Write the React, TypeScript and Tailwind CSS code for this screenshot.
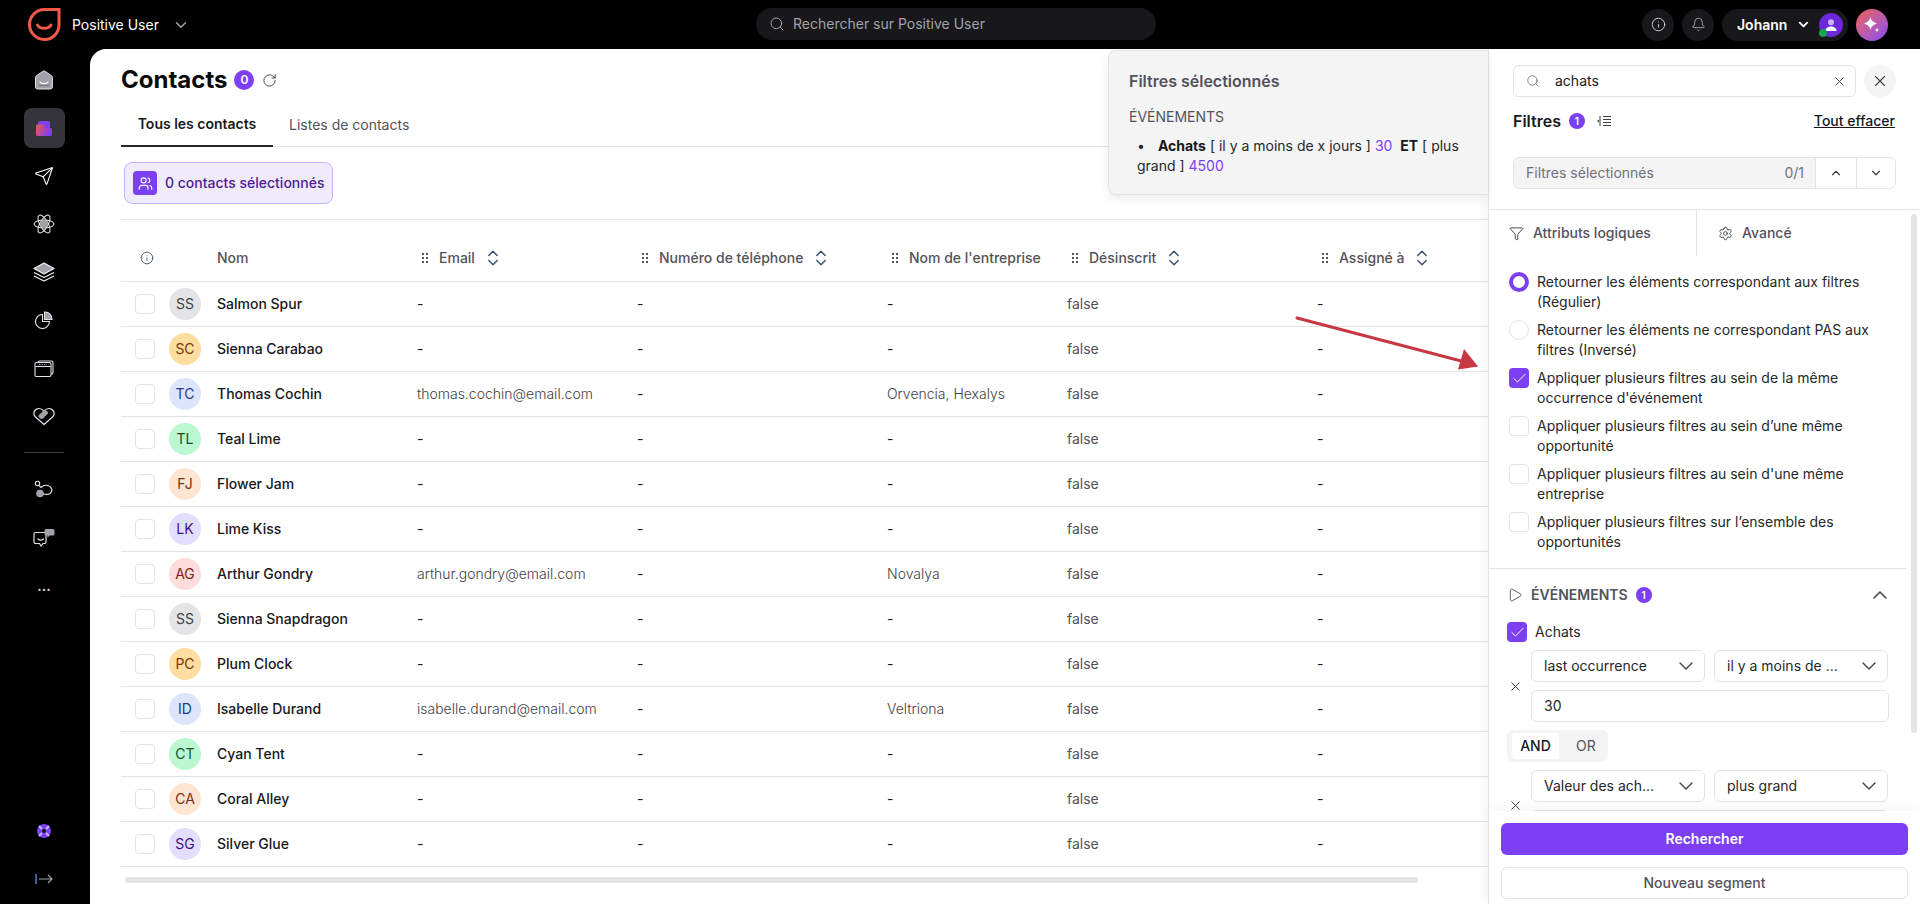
import { Bell, Check, ChevronDown, ChevronUp, ChevronsUpDown, Filter, Info, Play, RotateCw, Search, Send, Settings, Users, X } from 'lucide-react'

type Contact = {
  initials: string
  name: string
  email: string
  company: string
  avatar: string
}

const gray = 'bg-[#e4e4e7] text-[#3f3f46]'
const amber = 'bg-[#fedd9f] text-[#78350f]'
const blue = 'bg-[#dde5fd] text-[#1e3a8a]'
const green = 'bg-[#bbf7d0] text-[#14532d]'
const orange = 'bg-[#fee5d2] text-[#7c2d12]'
const purple = 'bg-[#e4defe] text-[#3b0e8c]'
const red = 'bg-[#fddcdc] text-[#7f1d1d]'

const contacts: Contact[] = [
  { initials: 'SS', name: 'Salmon Spur', email: '-', company: '-', avatar: gray },
  { initials: 'SC', name: 'Sienna Carabao', email: '-', company: '-', avatar: amber },
  { initials: 'TC', name: 'Thomas Cochin', email: 'thomas.cochin@email.com', company: 'Orvencia, Hexalys', avatar: blue },
  { initials: 'TL', name: 'Teal Lime', email: '-', company: '-', avatar: green },
  { initials: 'FJ', name: 'Flower Jam', email: '-', company: '-', avatar: orange },
  { initials: 'LK', name: 'Lime Kiss', email: '-', company: '-', avatar: purple },
  { initials: 'AG', name: 'Arthur Gondry', email: 'arthur.gondry@email.com', company: 'Novalya', avatar: red },
  { initials: 'SS', name: 'Sienna Snapdragon', email: '-', company: '-', avatar: gray },
  { initials: 'PC', name: 'Plum Clock', email: '-', company: '-', avatar: amber },
  { initials: 'ID', name: 'Isabelle Durand', email: 'isabelle.durand@email.com', company: 'Veltriona', avatar: blue },
  { initials: 'CT', name: 'Cyan Tent', email: '-', company: '-', avatar: green },
  { initials: 'CA', name: 'Coral Alley', email: '-', company: '-', avatar: orange },
  { initials: 'SG', name: 'Silver Glue', email: '-', company: '-', avatar: purple },
]

const options = [
  { kind: 'radio-on', text: 'Retourner les éléments correspondant aux filtres (Régulier)' },
  { kind: 'radio', text: 'Retourner les éléments ne correspondant PAS aux filtres (Inversé)' },
  { kind: 'check-on', text: "Appliquer plusieurs filtres au sein de la même occurrence d'événement" },
  { kind: 'check', text: 'Appliquer plusieurs filtres au sein d’une même opportunité' },
  { kind: 'check', text: "Appliquer plusieurs filtres au sein d'une même entreprise" },
  { kind: 'check', text: 'Appliquer plusieurs filtres sur l’ensemble des opportunités' },
]

const gridCols = 'grid grid-cols-[96px_200px_220px_250px_180px_250px_1fr]'

function Logo() {
  return (
    <svg width="33" height="33" viewBox="0 0 33 33" fill="none" stroke="#f4594a" strokeWidth="3" strokeLinecap="round">
      <path d="M31 1.500H16.500C8 1.500 1.500 8.400 1.500 16.500S8.200 31.500 16.500 31.500 31 24.800 31 16.500V1.500Z" />
      <path d="M9.500 17c2 4.400 11 4.400 13.500 0" />
    </svg>
  )
}

function HomeIcon() {
  return (
    <svg width="20" height="20" viewBox="0 0 20 20">
      <path d="M8.800 1.400a2 2 0 0 1 2.400 0l6.300 4.300a2 2 0 0 1 .9 1.600V17a2 2 0 0 1-2 2H3.500a2 2 0 0 1-2-2V7.300a2 2 0 0 1 .9-1.600Z" fill="#a1a1aa" stroke="#e4e4e7" strokeWidth="1" />
      <path d="M6 12c1.300 2.200 6.700 2.200 8 0" fill="none" stroke="#fff" strokeWidth="1.300" strokeLinecap="round" />
      <path d="M5 15.500h10" stroke="#71717a" strokeWidth="1" />
    </svg>
  )
}

function FolderIcon() {
  return (
    <svg width="16" height="15" viewBox="0 0 16 15">
      <defs>
        <linearGradient id="folder-fill" x1="0" y1="0" x2="1" y2="0.4">
          <stop offset="0" stopColor="#f4594a" />
          <stop offset="1" stopColor="#7c3ff2" />
        </linearGradient>
      </defs>
      <rect x="2" y="0" width="12" height="9" rx="2" fill="#7c3ff2" />
      <path d="M0 5a1.500 1.500 0 0 1 1.500-1.500H7a1.500 1.500 0 0 1 1.500 1.500v.5a1.500 1.500 0 0 0 1.500 1.500h4.500A1.500 1.500 0 0 1 16 8.500v5a1.500 1.500 0 0 1-1.500 1.500h-13A1.500 1.500 0 0 1 0 13.500Z" fill="url(#folder-fill)" />
    </svg>
  )
}

function AtomIcon() {
  return (
    <svg width="22" height="22" viewBox="0 0 22 22" fill="none" stroke="#f4f4f5" strokeWidth="1">
      <ellipse cx="11" cy="11" rx="10" ry="4" />
      <ellipse cx="11" cy="11" rx="10" ry="4" transform="rotate(60 11 11)" />
      <ellipse cx="11" cy="11" rx="10" ry="4" transform="rotate(120 11 11)" />
      <circle cx="11" cy="11" r="4" fill="#a1a1aa" stroke="none" />
    </svg>
  )
}

function LayersIcon() {
  return (
    <svg width="22" height="20" viewBox="0 0 22 20" fill="none" stroke="#f4f4f5" strokeWidth="1.100" strokeLinejoin="round">
      <path d="M1 10.500l10 5 10-5M1 14l10 5 10-5" />
      <path d="M11 1l10 5.500-10 5.500L1 6.500Z" fill="#a1a1aa" />
    </svg>
  )
}

function ChartIcon() {
  return (
    <svg width="18" height="18" viewBox="0 0 18 18" fill="none" stroke="#e4e4e7" strokeWidth="1.100">
      <path d="M7.500 3.500a7 7 0 1 0 7 7h-7Z" />
      <path d="M9.500 1a7 7 0 0 1 7.500 7.500H9.500Z" fill="#a1a1aa" />
    </svg>
  )
}

function WindowsIcon() {
  return (
    <svg width="20" height="17" viewBox="0 0 20 17" fill="none" stroke="#e4e4e7" strokeWidth="1.100">
      <path d="M4 2.500V2.300A1.500 1.500 0 0 1 5.500 1h12A1.500 1.500 0 0 1 19 2.500v10a1.500 1.500 0 0 1-1.500 1.500h-.5" />
      <rect x="1" y="2.500" width="16" height="14" rx="1.500" />
      <path d="M1.500 6.500h15" />
      <path d="M5 4.500h8" strokeDasharray="1.500 1" stroke="#a1a1aa" />
    </svg>
  )
}

function TagHeartIcon() {
  return (
    <svg width="22" height="20" viewBox="0 0 22 20" fill="none" stroke="#e4e4e7" strokeWidth="1.200" strokeLinejoin="round">
      <path d="M11 18.500L2 10.500C-.5 7.500 1.500 2.500 6 2.500c2 0 3.600 1 5 2.500 1.400-1.500 3-2.500 5-2.500 4.500 0 6.500 5 4 8Z" />
      <path d="M5 10l6-6 3 1c1 .5 1.500 2 .5 3L10 12.500c-1 .8-2 .5-3 0Z" fill="#a1a1aa" stroke="none" />
    </svg>
  )
}

function FlowIcon() {
  return (
    <svg width="20" height="20" viewBox="0 0 20 20" fill="none" stroke="#e4e4e7" strokeWidth="1.100">
      <circle cx="3.500" cy="3.500" r="2.200" />
      <circle cx="6" cy="13.500" r="3.800" fill="#a1a1aa" stroke="none" />
      <path d="M5 5.500l2 2C9 5.500 11.500 5 13.500 5.500c3.500.8 5 3.500 4 6s-4 3.500-8.500 2.500" />
    </svg>
  )
}

function ChatIcon() {
  return (
    <svg width="22" height="20" viewBox="0 0 22 20" fill="none" stroke="#e4e4e7" strokeWidth="1.200">
      <path d="M2.500 4.500H13v9.500a1.500 1.500 0 0 1-1.500 1.500H10l-2 2.500-1.500-2.500h-4A1.500 1.500 0 0 1 1 14V6a1.500 1.500 0 0 1 1.500-1.500Z" />
      <path d="M5 11c1.500 1.200 4 1.200 5.500 0" strokeLinecap="round" />
      <path d="M13 1h7a1.500 1.500 0 0 1 1.500 1.500V6A1.500 1.500 0 0 1 20 7.500h-3.500L14.500 10V7.500H13A1.500 1.500 0 0 1 11.500 6V2.500A1.500 1.500 0 0 1 13 1Z" fill="#a1a1aa" stroke="none" />
    </svg>
  )
}

function LifebuoyIcon() {
  return (
    <svg width="14" height="14" viewBox="0 0 14 14">
      <circle cx="7" cy="7" r="7" fill="#7c3ff2" />
      <circle cx="7" cy="7" r="2" fill="#18181b" />
      <path d="M2 2l3 3M12 2L9 5M2 12l3-3M12 12L9 9" stroke="#c4b5fd" strokeWidth="2" />
    </svg>
  )
}

function CollapseIcon() {
  return (
    <svg width="18" height="12" viewBox="0 0 18 12" fill="none">
      <path d="M1 1v10" stroke="#60a5fa" strokeWidth="1.200" />
      <path d="M4 6h13M13 2l4 4-4 4" stroke="#a1a1aa" strokeWidth="1.200" />
    </svg>
  )
}

function FilterListIcon() {
  return (
    <svg width="14" height="10" viewBox="0 0 14 10" fill="none" stroke="#3f3f46" strokeWidth="1">
      <path d="M3 0v10M6 .5h8M6 3.500h8M6 6.500h8M6 9.500h8" />
      <path d="M0 5l2-1.500v3Z" fill="#3f3f46" stroke="none" />
    </svg>
  )
}

function Sparkles() {
  return (
    <svg width="18" height="18" viewBox="0 0 18 18" fill="#fff">
      <path d="M7.500 1c.8 3.500 2.500 5 6.500 6.500-4 1.500-5.700 3-6.500 6.500-.8-3.500-2.500-5-6.500-6.500C5 6 6.700 4.500 7.500 1Z" />
      <path d="M14 11.500c.2 1.700.8 2.300 2.500 2.500-1.700.2-2.300.8-2.500 2.500-.2-1.700-.8-2.300-2.500-2.500 1.700-.2 2.300-.8 2.500-2.500Z" />
    </svg>
  )
}

function GripDots() {
  return (
    <svg width="14" height="14" viewBox="0 0 14 14" fill="#52525b">
      <rect x="4" y="2" width="2" height="2" />
      <rect x="8" y="2" width="2" height="2" />
      <rect x="4" y="6" width="2" height="2" />
      <rect x="8" y="6" width="2" height="2" />
      <rect x="4" y="10" width="2" height="2" />
      <rect x="8" y="10" width="2" height="2" />
    </svg>
  )
}

function NavItem({ children, active }: { children: React.ReactNode; active?: boolean }) {
  return (
    <div className="h-12 flex items-center justify-center">
      <div className={`w-[41px] h-[40px] rounded-lg flex items-center justify-center ${active ? 'bg-[#35343a]' : ''}`}>{children}</div>
    </div>
  )
}

function HeaderCell({ label, sortable = true }: { label: string; sortable?: boolean }) {
  return (
    <div className="flex items-center pl-[1px] text-[#52525b] font-medium">
      <GripDots />
      <span className="ml-[7px]">{label}</span>
      {sortable && <ChevronsUpDown size={20} strokeWidth={1.8} className="ml-[8px] text-[#3f5272]" />}
    </div>
  )
}

function CheckBox({ on }: { on?: boolean }) {
  if (on) {
    return (
      <span className="w-5 h-5 shrink-0 rounded-[4px] bg-[#7c3ff2] flex items-center justify-center">
        <Check size={17} strokeWidth={1.4} className="text-white" />
      </span>
    )
  }
  return <span className="w-5 h-5 shrink-0 rounded-[4px] border border-[#e4e4e7] bg-white block" />
}

function OptionMark({ kind }: { kind: string }) {
  if (kind === 'radio-on') return <span className="w-5 h-5 shrink-0 rounded-full border-[4px] border-[#7c3ff2] bg-white block" />
  if (kind === 'radio') return <span className="w-5 h-5 shrink-0 rounded-full border border-[#e4e4e7] bg-white block" />
  return <CheckBox on={kind === 'check-on'} />
}

function SelectBox({ label, className }: { label: string; className: string }) {
  return (
    <div className={`h-8 rounded-md border border-[#e4e4e7] bg-white pl-3 pr-[6px] flex items-center justify-between text-[#27272a] ${className}`}>
      <span>{label}</span>
      <ChevronDown size={24} strokeWidth={1.4} className="text-[#3f3f46]" />
    </div>
  )
}

export default function App() {
  return (
    <div className="relative w-[1920px] h-[904px] overflow-hidden bg-black flex flex-col text-sm font-['Inter',sans-serif] text-[#18181b]">
      {/* barre du haut */}
      <header className="h-[49px] shrink-0 flex items-center pl-[28px] pr-[32px] relative">
        <Logo />
        <span className="ml-[11px] text-white">Positive User</span>
        <ChevronDown size={18} strokeWidth={2} className="ml-[13px] text-[#a1a1aa]" />
        <div className="absolute left-[756px] top-[8px] w-[400px] h-8 rounded-full bg-[#18181b] flex items-center pl-[13px] text-[#a1a1aa]">
          <Search size={16} strokeWidth={1.5} className="text-[#9ca3af]" />
          <span className="ml-[8px]">Rechercher sur Positive User</span>
        </div>
        <div className="ml-auto flex items-center gap-2">
          <span className="w-8 h-8 rounded-full bg-[#18181b] flex items-center justify-center">
            <Info size={15} strokeWidth={1.5} className="text-[#d4d4d8]" />
          </span>
          <span className="w-8 h-8 rounded-full bg-[#18181b] flex items-center justify-center">
            <Bell size={15} strokeWidth={1.5} className="text-[#a1a1aa]" />
          </span>
          <div className="w-[126px] h-8 rounded-full bg-[#18181b] flex items-center pl-[15px] text-white font-semibold">
            <span>Johann</span>
            <ChevronDown size={15} strokeWidth={3} className="ml-[9px]" />
            <span className="relative ml-[8px] w-6 h-6 rounded-full bg-[#6d28d9] flex items-center justify-center">
              <svg width="14" height="14" viewBox="0 0 14 14">
                <circle cx="7" cy="4.200" r="3" fill="#c4b5fd" />
                <path d="M1.500 13c0-3 2.500-4.500 5.500-4.500s5.500 1.500 5.500 4.500Z" fill="#fff" />
              </svg>
              <span className="absolute left-0 bottom-0 w-2 h-2 rounded-full bg-[#16a34a]" />
            </span>
          </div>
          <span className="w-8 h-8 rounded-full bg-gradient-to-br from-[#f4594a] to-[#8b3ff2] flex items-center justify-center">
            <Sparkles />
          </span>
        </div>
      </header>

      <div className="flex-1 flex min-h-0">
        {/* navigation */}
        <nav className="w-[90px] shrink-0 flex flex-col pt-[7px] pb-px pr-[2px]">
          <NavItem><HomeIcon /></NavItem>
          <NavItem active><FolderIcon /></NavItem>
          <NavItem><Send size={20} strokeWidth={1.3} className="text-white" /></NavItem>
          <NavItem><AtomIcon /></NavItem>
          <NavItem><LayersIcon /></NavItem>
          <NavItem><ChartIcon /></NavItem>
          <NavItem><WindowsIcon /></NavItem>
          <NavItem><TagHeartIcon /></NavItem>
          <div className="h-px mx-[24px] mt-[12px] mb-[13px] bg-[#3f3f46]" />
          <NavItem><FlowIcon /></NavItem>
          <NavItem><ChatIcon /></NavItem>
          <NavItem><span className="text-[#d4d4d8] font-semibold leading-none">...</span></NavItem>
          <div className="mt-auto">
            <NavItem><LifebuoyIcon /></NavItem>
            <NavItem><CollapseIcon /></NavItem>
          </div>
        </nav>

        <div className="flex-1 min-w-0 flex bg-white rounded-tl-[16px] overflow-hidden">
          {/* liste des contacts */}
          <main className="flex-1 min-w-0 pl-[31px] flex flex-col">
            <div className="flex items-center h-[62px]">
              <h1 className="text-2xl font-bold text-[#09090b]">Contacts</h1>
              <span className="ml-[7px] w-5 h-5 rounded-full bg-[#7c3ff2] text-white text-xs font-semibold flex items-center justify-center">0</span>
              <RotateCw size={15} strokeWidth={1.5} className="ml-2 text-[#3f3f46]" />
            </div>
            <div className="h-[36px] flex border-b border-[#e4e4e7]">
              <div className="w-[152px] h-[36px] border-b-2 border-[#27272a] flex items-center justify-center font-semibold text-[#18181b] pb-[8px]">Tous les contacts</div>
              <div className="ml-4 h-[36px] flex items-center text-[#52525b] pb-[8px]">Listes de contacts</div>
            </div>
            <div className="h-[73px] flex items-center pl-[3px] border-b border-[#e4e4e7]">
              <div className="w-[209px] h-[42px] rounded-lg border border-[#c4b5fd] bg-[#f0ebfb] flex items-center pl-2 font-medium text-[#4c1d95]">
                <span className="w-6 h-6 rounded bg-[#7c3ff2] flex items-center justify-center">
                  <Users size={15} strokeWidth={1.8} className="text-white" />
                </span>
                <span className="ml-2">0 contacts sélectionnés</span>
              </div>
            </div>
            <div className={`${gridCols} h-[62px] items-center pt-[15px] border-b border-[#e4e4e7] text-[#52525b]`}>
              <div className="pl-[19px]"><Info size={14} strokeWidth={1.5} className="text-[#3f5272]" /></div>
              <div className="font-medium">Nom</div>
              <HeaderCell label="Email" />
              <HeaderCell label="Numéro de téléphone" />
              <HeaderCell label="Nom de l'entreprise" sortable={false} />
              <HeaderCell label="Désinscrit" />
              <HeaderCell label="Assigné à" />
            </div>
            {contacts.map((c, index) => (
              <div key={index} className={`${gridCols} h-[45px] items-center border-b border-[#e4e4e7]`}>
                <div className="flex items-center pl-[14px] gap-[14px]">
                  <CheckBox />
                  <span className={`w-8 h-8 rounded-full flex items-center justify-center ${c.avatar}`}>{c.initials}</span>
                </div>
                <div className="font-medium">{c.name}</div>
                <div className={c.email === '-' ? '' : 'font-light text-[#3f3f46]'}>{c.email}</div>
                <div>-</div>
                <div className={c.company === '-' ? '' : 'font-light text-[#3f3f46]'}>{c.company}</div>
                <div className="text-[#52525b]">false</div>
                <div>-</div>
              </div>
            ))}
            <div className="mt-[10px] ml-[4px] w-[1293px] h-[6px] rounded-full bg-[#e4e4e7]" />
          </main>

          {/* panneau des filtres */}
          <aside className="relative w-[432px] shrink-0 border-l border-[#e4e4e7] flex flex-col shadow-[-4px_0_10px_rgba(0,0,0,0.04)]">
            <div className="pt-4 pl-[24px] pr-[24px]">
              <div className="flex items-center gap-2">
                <div className="flex-1 h-8 rounded-md border border-[#e4e4e7] flex items-center pl-3 pr-[8px]">
                  <Search size={14} strokeWidth={1.5} className="text-[#71717a]" />
                  <span className="ml-[15px] flex-1">achats</span>
                  <X size={15} strokeWidth={1.5} className="text-[#3f3f46]" />
                </div>
                <span className="w-8 h-8 rounded-full bg-[#f4f4f5] flex items-center justify-center">
                  <X size={18} strokeWidth={1.5} className="text-[#3f3f46]" />
                </span>
              </div>
              <div className="mt-[12px] h-[24px] flex items-center">
                <span className="text-base font-semibold">Filtres</span>
                <span className="ml-2 w-4 h-4 rounded-full bg-[#7c3ff2] text-white text-[10px] font-semibold flex items-center justify-center">1</span>
                <span className="ml-[12px]"><FilterListIcon /></span>
                <span className="ml-auto underline font-medium mr-px">Tout effacer</span>
              </div>
              <div className="mt-[24px] h-8 flex rounded-md border border-[#e4e4e7] overflow-hidden">
                <div className="w-[301px] bg-[#f4f4f5] flex items-center justify-between pl-3 pr-[11px] text-[#71717a]">
                  <span>Filtres sélectionnés</span>
                  <span>0/1</span>
                </div>
                <span className="w-[41px] border-l border-[#e4e4e7] flex items-center justify-center">
                  <ChevronUp size={14} strokeWidth={2} className="text-[#3f3f46]" />
                </span>
                <span className="flex-1 border-l border-[#e4e4e7] flex items-center justify-center">
                  <ChevronDown size={14} strokeWidth={2} className="text-[#3f3f46]" />
                </span>
              </div>
            </div>

            <div className="mt-[20px] flex-1 min-h-0 overflow-hidden relative border-t border-[#e4e4e7]">
              <div className="absolute right-[3px] top-[4px] w-[6px] h-[519px] rounded-full bg-[#e4e4e7]" />
              <div className="flex h-[46px] text-[#52525b] font-medium">
                <div className="w-[208px] border-r border-[#e4e4e7] flex items-center pl-[20px]">
                  <Filter size={15} strokeWidth={1.5} className="text-[#3f3f46]" />
                  <span className="ml-[9px]">Attributs logiques</span>
                </div>
                <div className="flex items-center pl-[21px]">
                  <Settings size={15} strokeWidth={1.5} className="text-[#3f3f46]" />
                  <span className="ml-[9px]">Avancé</span>
                </div>
              </div>
              <div className="pt-[16px] pl-[20px] pr-[25px] h-[313px] w-[417px] border-b border-[#e4e4e7] flex flex-col gap-[8px]">
                {options.map((o) => (
                  <div key={o.text} className="flex gap-2 leading-5 text-[#27272a]">
                    <OptionMark kind={o.kind} />
                    <span>{o.text}</span>
                  </div>
                ))}
              </div>
              <div className="pl-[18px] pr-[31px]">
                <div className="mt-[17px] h-[18px] flex items-center">
                  <Play size={16} strokeWidth={1.4} className="text-[#52525b]" />
                  <span className="ml-[8px] font-semibold text-[#52525b]">ÉVÉNEMENTS</span>
                  <span className="ml-2 w-4 h-4 rounded-full bg-[#7c3ff2] text-white text-[10px] font-semibold flex items-center justify-center">1</span>
                  <ChevronUp size={24} strokeWidth={1.5} className="ml-auto mr-[-3px] text-[#3f3f46]" />
                </div>
                <div className="mt-[18px] flex items-center gap-2 text-[#27272a]">
                  <CheckBox on />
                  <span>Achats</span>
                </div>
                <div className="mt-2 flex items-center">
                  <span className="w-6 shrink-0 pl-px flex">
                    <X size={15} strokeWidth={1.4} className="text-[#27272a]" />
                  </span>
                  <div className="flex-1 flex flex-wrap gap-x-[9px] gap-y-2">
                    <SelectBox label="last occurrence" className="w-[174px]" />
                    <SelectBox label="il y a moins de ..." className="w-[174px]" />
                    <div className="w-full h-8 rounded-md border border-[#e4e4e7] flex items-center pl-3 text-[#27272a]">30</div>
                  </div>
                </div>
                <div className="mt-2 w-[101px] h-8 rounded-md bg-[#f4f4f5] flex items-center pl-[5px]">
                  <span className="w-[47px] h-[26px] rounded bg-white font-medium flex items-center justify-center">AND</span>
                  <span className="ml-[17px] text-[#52525b]">OR</span>
                </div>
                <div className="mt-2 flex items-start">
                  <span className="w-6 shrink-0 pl-px pt-[28px] flex">
                    <X size={15} strokeWidth={1.4} className="text-[#27272a]" />
                  </span>
                  <div className="flex-1 flex flex-wrap gap-x-[9px] gap-y-2">
                    <SelectBox label="Valeur des ach..." className="w-[174px]" />
                    <SelectBox label="plus grand" className="w-[174px]" />
                    <div className="w-full h-8 rounded-md border border-[#e4e4e7]" />
                  </div>
                </div>
              </div>
            </div>

            <div className="relative h-[93px] shrink-0 bg-white px-[12px] pt-[12px] flex flex-col gap-[12px] shadow-[0_-6px_12px_rgba(0,0,0,0.03)]">
              <div className="h-8 rounded-md bg-[#7c3ff2] text-white font-semibold flex items-center justify-center">Rechercher</div>
              <div className="h-8 rounded-md border border-[#e4e4e7] text-[#52525b] font-medium flex items-center justify-center">Nouveau segment</div>
            </div>
          </aside>
        </div>
      </div>

      {/* infobulle des filtres */}
      <div className="absolute left-[1108px] top-[50px] w-[380px] h-[145px] rounded-l-lg border border-r-0 border-[#e4e4e7] bg-[#f4f4f5] pl-[20px] pr-4 pt-[18px] shadow-[0_4px_10px_rgba(0,0,0,0.08)] text-[#27272a]">
        <div className="text-base font-semibold text-[#52525b]">Filtres sélectionnés</div>
        <div className="mt-[14px] text-[#52525b]">ÉVÉNEMENTS</div>
        <div className="mt-[9px] leading-5 pl-[8px]">
          <div>
            <span className="mr-[13px]">•</span>
            <b className="font-bold text-[#18181b]">Achats</b> [ il y a moins de x jours ] <span className="text-[#7c3ff2]">30</span> <b className="ml-[4px] font-bold text-[#18181b]">ET</b> [ plus
          </div>
          <div>
            grand ] <span className="text-[#7c3ff2]">4500</span>
          </div>
        </div>
      </div>

      {/* flèche d'annotation */}
      <svg className="absolute left-[1290px] top-[310px]" width="200" height="65" viewBox="0 0 200 65">
        <path d="M7 8L175 52" stroke="#c73844" strokeWidth="3" strokeLinecap="round" />
        <path d="M188 56.500L168 59.500L174 39Z" fill="#c73844" />
      </svg>
    </div>
  )
}
